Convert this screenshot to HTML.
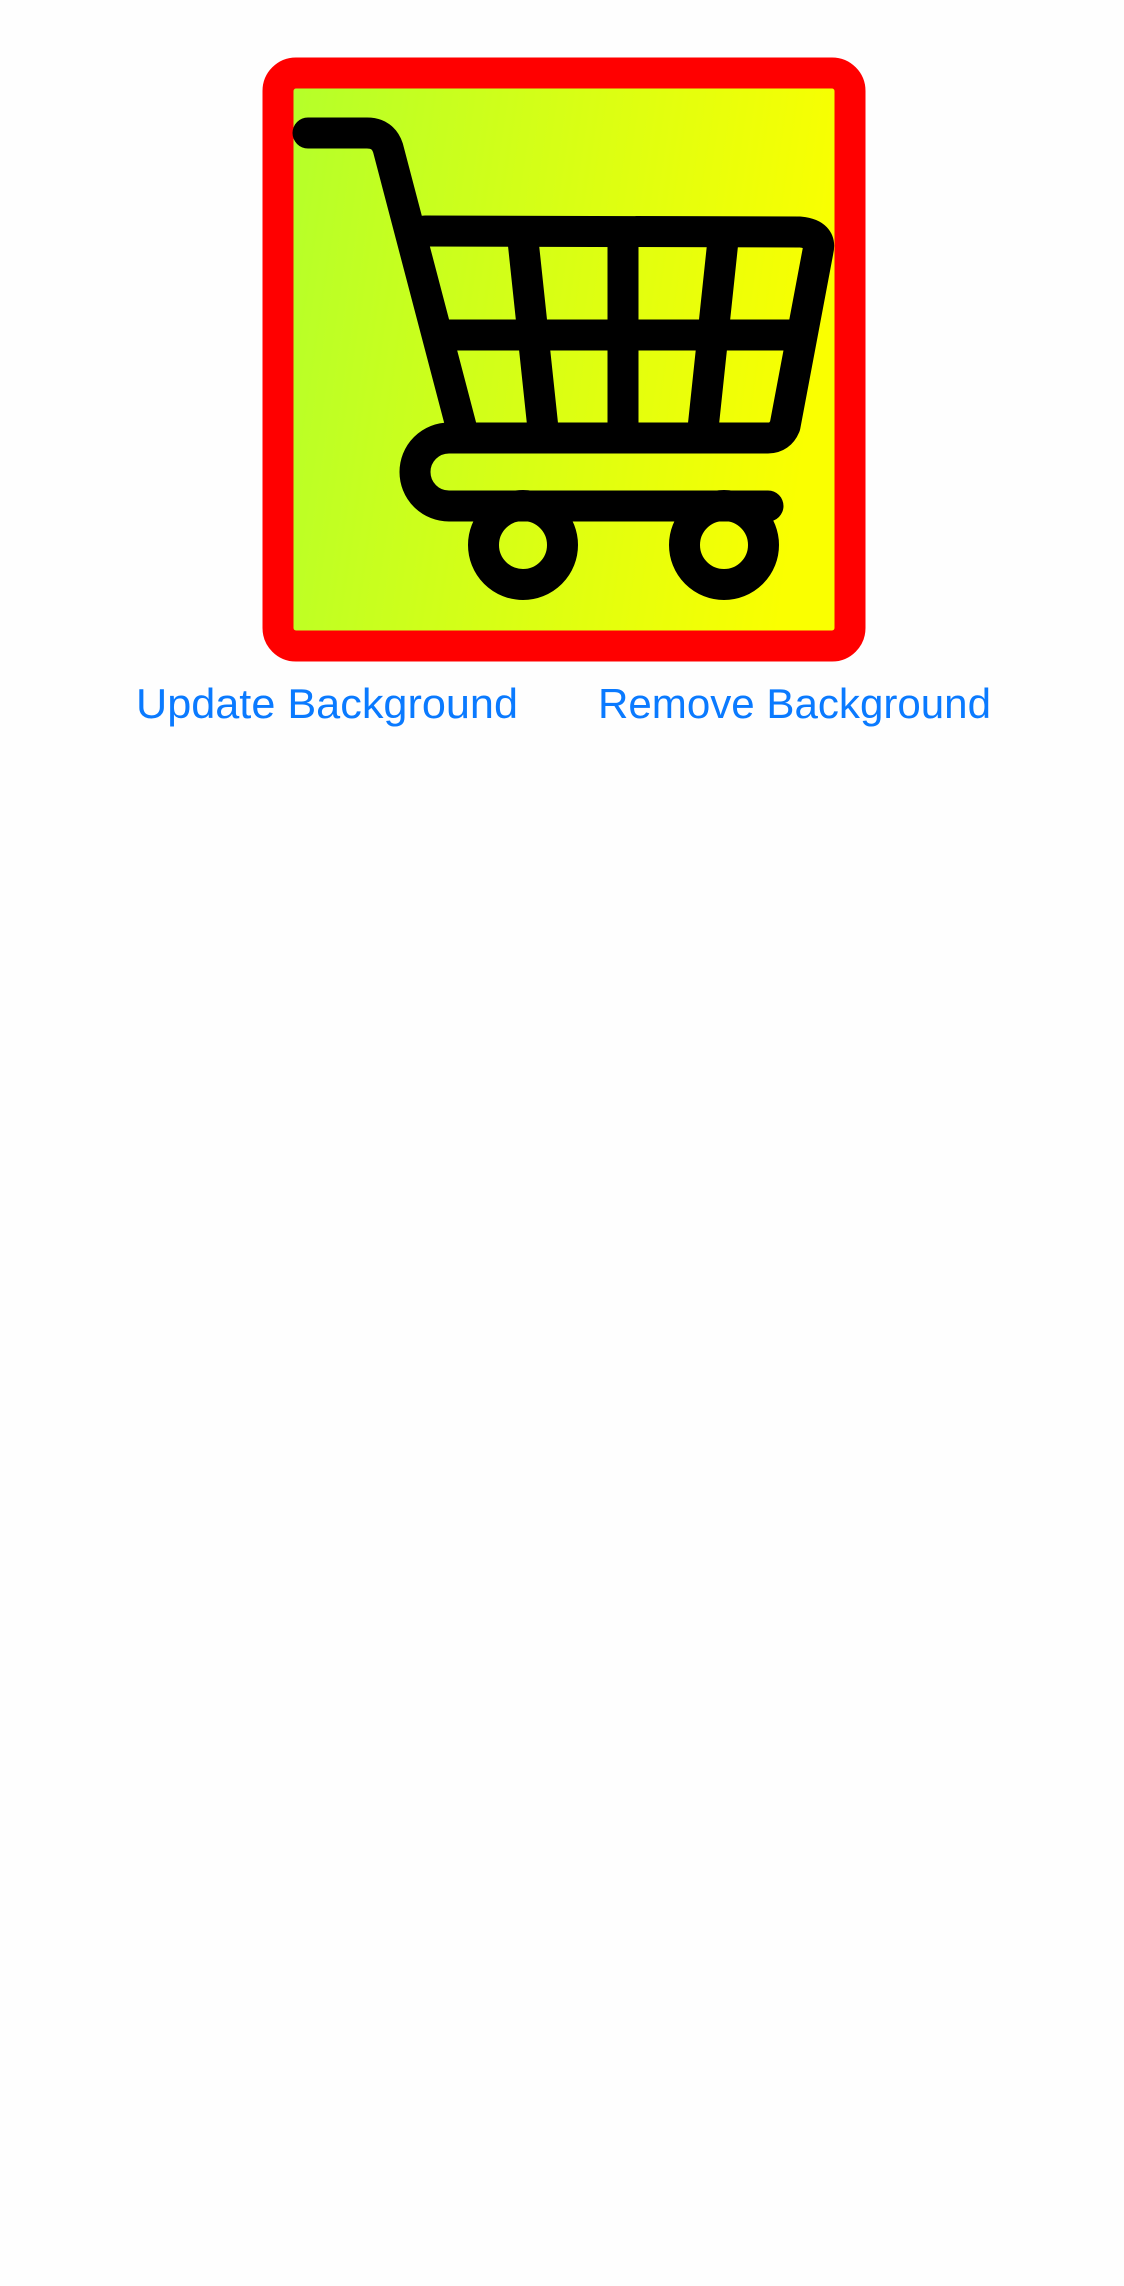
<!DOCTYPE html>
<html><head><meta charset="utf-8"><style>
html,body{margin:0;padding:0;background:#fefefe;width:1124px;height:2286px;overflow:hidden}
</style></head><body>
<svg width="1124" height="2286" viewBox="0 0 1124 2286" xmlns="http://www.w3.org/2000/svg" style="position:absolute;left:0;top:0">
<defs><linearGradient id="g" x1="0" y1="0" x2="1" y2="0.15">
<stop offset="0" stop-color="#b3ff2b"/><stop offset="1" stop-color="#faff00"/></linearGradient></defs>
<rect x="278" y="73" width="572" height="573" rx="18" fill="url(#g)" stroke="#ff0000" stroke-width="31"/>
<g fill="none" stroke="#000" stroke-width="31" stroke-linecap="round" stroke-linejoin="round">
<path d="M308 133 H367 Q383 133 388 148 L461 426"/>
<path d="M425 231 L800 232 Q822 234 818 251 L785 426 Q780 438 768 438 H449 A34 34 0 0 0 449 506 H768" />
<path d="M440 335 H800" stroke-linecap="butt"/>
<path d="M522 231 L544 438 M623 231 V438 M724 231 L702 438" stroke-linecap="butt"/>
<circle cx="523" cy="545" r="39.5"/>
<circle cx="724" cy="545" r="39.5"/>
</g>
<g font-family="Liberation Sans, sans-serif" font-size="42" fill="#0a7aff">
<text x="136" y="718" textLength="382" lengthAdjust="spacingAndGlyphs">Update Background</text>
<text x="598" y="718" textLength="393" lengthAdjust="spacingAndGlyphs">Remove Background</text>
</g>
</svg>
</body></html>
